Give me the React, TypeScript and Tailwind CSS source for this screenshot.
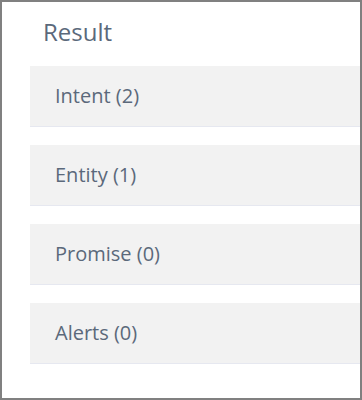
export default function App() {
  const items = ["Intent (2)", "Entity (1)", "Promise (0)", "Alerts (0)"];
  return (
    <div
      className="w-[362px] h-[400px] border-2 border-[#808080] bg-white overflow-hidden"
      style={{ fontFamily: '"Open Sans", sans-serif' }}
    >
      <div className="h-[64px] pt-[15px] pl-[41px] text-[24px] text-[#5b697b] leading-[30px]">
        Result
      </div>
      <div className="pl-[28px] flex flex-col gap-[18px]">
        {items.map((t) => (
          <div
            key={t}
            className="h-[61px] bg-[#f2f2f2] border-b border-[#e6e8f0] flex items-center pl-[25px] text-[20px] text-[#5b697b]"
          >
            {t}
          </div>
        ))}
      </div>
    </div>
  );
}
